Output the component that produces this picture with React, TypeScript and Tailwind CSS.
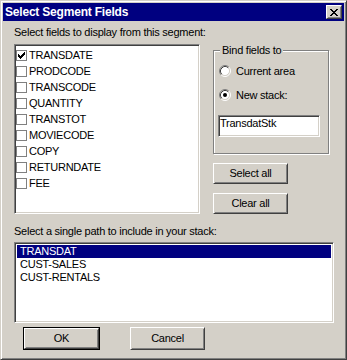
import React from "react"

const sunken =
  "border border-t-[#808080] border-l-[#808080] border-r-white border-b-white shadow-[inset_1px_1px_0_#404040,inset_-1px_-1px_0_#d4d0c8]"
const raised =
  "bg-[#d4d0c8] border border-t-white border-l-white border-r-[#404040] border-b-[#404040] shadow-[inset_1px_1px_0_#d4d0c8,inset_-1px_-1px_0_#808080]"

const fields = [
  "TRANSDATE",
  "PRODCODE",
  "TRANSCODE",
  "QUANTITY",
  "TRANSTOT",
  "MOVIECODE",
  "COPY",
  "RETURNDATE",
  "FEE",
]
const paths = ["TRANSDAT", "CUST-SALES", "CUST-RENTALS"]

const CheckBox = ({ checked }: { checked: boolean }) => (
  <div className="w-[11px] h-[11px] border border-[#808080] bg-white flex items-center justify-center shrink-0">
    {checked && (
      <svg width="7" height="7" viewBox="0 0 7 7">
        <path
          d="M0 2h1v3H0z M1 3h1v3H1z M2 4h1v3H2z M3 3h1v3H3z M4 2h1v3H4z M5 1h1v3H5z M6 0h1v3H6z"
          fill="#000"
        />
      </svg>
    )}
  </div>
)

const Radio = ({ checked }: { checked: boolean }) => (
  <svg width="12" height="12" viewBox="0 0 12 12" className="shrink-0">
    <circle cx="6" cy="6" r="4.5" fill="#fff" />
    <path d="M2.11 9.89 A5.5 5.5 0 0 1 9.89 2.11" stroke="#808080" fill="none" />
    <path d="M9.89 2.11 A5.5 5.5 0 0 1 2.11 9.89" stroke="#fff" fill="none" />
    <path d="M2.82 9.18 A4.5 4.5 0 0 1 9.18 2.82" stroke="#404040" fill="none" />
    <path d="M9.18 2.82 A4.5 4.5 0 0 1 2.82 9.18" stroke="#d4d0c8" fill="none" />
    {checked && <circle cx="6" cy="6" r="2" fill="#000" />}
  </svg>
)

const Button = ({ label, h = "h-[21px]" }: { label: string; h?: string }) => (
  <div className={`w-[75px] ${h} ${raised} flex items-center justify-center`}>
    {label}
  </div>
)

export default function App() {
  return (
    <div className="w-[347px] h-[360px] bg-[#d4d0c8] border border-t-[#d4d0c8] border-l-[#d4d0c8] border-r-[#404040] border-b-[#404040] shadow-[inset_1px_1px_0_#fff,inset_-1px_-1px_0_#808080] p-[2px] font-['Liberation_Sans',Arial,sans-serif] text-[11px] leading-[13px] tracking-[-0.25px] text-black">
      {/* title bar */}
      <div className="h-[18px] bg-[#000080] flex items-center justify-between pl-[2px] pr-[2px]">
        <span className="text-white font-bold text-[12px] leading-[18px] tracking-[-0.2px]">
          Select Segment Fields
        </span>
        <div className={`w-[16px] h-[14px] ${raised} flex items-center justify-center`}>
          <svg width="8" height="7" viewBox="0 0 8 7">
            <path
              d="M0 0h2v1H0z M6 0h2v1H6z M1 1h2v1H1z M5 1h2v1H5z M2 2h4v1H2z M3 3h2v1H3z M2 4h4v1H2z M1 5h2v1H1z M5 5h2v1H5z M0 6h2v1H0z M6 6h2v1H6z"
              fill="#000"
            />
          </svg>
        </div>
      </div>

      <div className="pl-[11px] pt-[5px]">
        <div>Select fields to display from this segment:</div>

        <div className="flex mt-[5px]">
          <div className={`w-[186px] h-[170px] bg-white ${sunken} pt-[2px] pl-[1px]`}>
            {fields.map((f, i) => (
              <div key={f} className="h-[16px] flex items-center leading-[16px]">
                <CheckBox checked={i === 0} />
                <span className="ml-[2px]">{f}</span>
              </div>
            ))}
          </div>

          <div className="ml-[13px] flex flex-col">
            <div className="mt-[6px] w-[116px] h-[104px] border border-[#808080] shadow-[inset_1px_1px_0_#fff,1px_1px_0_#fff] flex flex-col">
              <span className="-mt-[7px] ml-[6px] px-[2px] bg-[#d4d0c8] w-fit">Bind fields to</span>
              <div className="mt-[8px] pl-[5px] flex items-start h-[13px]">
                <Radio checked={false} />
                <span className="ml-[5px]">Current area</span>
              </div>
              <div className="mt-[11px] pl-[5px] flex items-start h-[13px]">
                <Radio checked={true} />
                <span className="ml-[5px]">New stack:</span>
              </div>
              <div className={`mt-[13px] ml-[4px] w-[102px] h-[22px] bg-white ${sunken} pt-[1px] pl-[1px]`}>
                TransdatStk
              </div>
            </div>
            <div className="mt-[9px]">
              <Button label="Select all" />
            </div>
            <div className="mt-[9px]">
              <Button label="Clear all" />
            </div>
          </div>
        </div>

        <div className="mt-[11px]">Select a single path to include in your stack:</div>

        <div className={`mt-[4px] w-[320px] h-[81px] bg-white ${sunken} p-[2px]`}>
          {paths.map((p, i) => (
            <div
              key={p}
              className={`h-[13px] pl-[3px] ${i === 0 ? "bg-[#000080] text-white" : ""}`}
            >
              {p}
            </div>
          ))}
        </div>

        <div className="flex mt-[4px] ml-[9px]">
          <div className="border border-black">
            <Button label="OK" />
          </div>
          <div className="ml-[30px]">
            <Button label="Cancel" h="h-[23px]" />
          </div>
        </div>
      </div>
    </div>
  )
}
